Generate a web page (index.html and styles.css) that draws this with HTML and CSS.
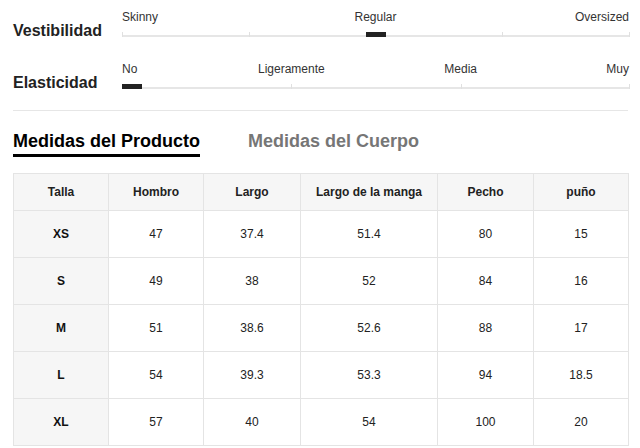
FILE: index.html
```html
<!DOCTYPE html>
<html lang="es">
<head>
<meta charset="utf-8">
<link rel="stylesheet" href="styles.css">
</head>
<body>
<div class="page">
  <div class="attr">
    <div class="attr-name">Vestibilidad</div>
    <div class="scale">
      <div class="labels">
        <span class="lb" style="left:0%">Skinny</span>
        <span class="lb mid" style="left:50%">Regular</span>
        <span class="lb end" style="left:100%">Oversized</span>
      </div>
      <div class="track">
        <i class="tick" style="left:0%"></i>
        <i class="tick" style="left:25%"></i>
        <i class="tick" style="left:50%"></i>
        <i class="tick" style="left:75%"></i>
        <i class="tick" style="left:100%"></i>
        <b class="marker" style="left:calc(50% - 10px)"></b>
      </div>
    </div>
  </div>
  <div class="attr">
    <div class="attr-name">Elasticidad</div>
    <div class="scale">
      <div class="labels">
        <span class="lb" style="left:0%">No</span>
        <span class="lb mid" style="left:33.4%">Ligeramente</span>
        <span class="lb mid" style="left:66.8%">Media</span>
        <span class="lb end" style="left:100%">Muy</span>
      </div>
      <div class="track">
        <i class="tick" style="left:0%"></i>
        <i class="tick" style="left:33.4%"></i>
        <i class="tick" style="left:66.8%"></i>
        <i class="tick" style="left:100%"></i>
        <b class="marker" style="left:0"></b>
      </div>
    </div>
  </div>
  <div class="sep"></div>
  <div class="tabs">
    <div class="tab active">Medidas del Producto</div>
    <div class="tab">Medidas del Cuerpo</div>
  </div>
  <table class="sizes">
    <colgroup>
      <col style="width:95px"><col style="width:95px"><col style="width:97px"><col style="width:137px"><col style="width:96px"><col style="width:95px">
    </colgroup>
    <thead>
      <tr><th>Talla</th><th>Hombro</th><th>Largo</th><th>Largo de la manga</th><th>Pecho</th><th>puño</th></tr>
    </thead>
    <tbody>
      <tr><th>XS</th><td>47</td><td>37.4</td><td>51.4</td><td>80</td><td>15</td></tr>
      <tr><th>S</th><td>49</td><td>38</td><td>52</td><td>84</td><td>16</td></tr>
      <tr><th>M</th><td>51</td><td>38.6</td><td>52.6</td><td>88</td><td>17</td></tr>
      <tr><th>L</th><td>54</td><td>39.3</td><td>53.3</td><td>94</td><td>18.5</td></tr>
      <tr><th>XL</th><td>57</td><td>40</td><td>54</td><td>100</td><td>20</td></tr>
    </tbody>
  </table>
</div>
</body>
</html>
```
FILE: styles.css
```css
* { box-sizing: border-box; }
html, body { margin: 0; padding: 0; background: #fff; }
body { font-family: "Liberation Sans", Arial, sans-serif; color: #222; overflow: hidden; }
.page { width: 640px; padding: 0 12px 0 13px; }
.attr { display: flex; align-items: flex-end; height: 52px; }
.attr:first-child { height: 38px; }
.attr-name { width: 109px; font-size: 16px; font-weight: bold; color: #222; line-height: 18px; margin-bottom: -2px; }
.scale { flex: 1; position: relative; height: 38px; margin-right: -1px; }
.labels { position: relative; height: 24px; }
.lb { position: absolute; top: 10px; font-size: 12px; color: #333; line-height: 14px; white-space: nowrap; }
.lb.mid { transform: translateX(-50%); }
.lb.end { transform: translateX(-100%); }
.track { position: relative; height: 2px; background: #e6e6e6; margin-top: 11px; }
.tick { position: absolute; bottom: 0; width: 1px; height: 5px; background: #e0e0e0; }
.marker { position: absolute; top: -3px; width: 20px; height: 5px; background: #222; }
.sep { height: 1px; background: #e6e6e6; margin-top: 20px; }
.tabs { display: flex; gap: 48px; height: 46px; padding-top: 20px; }
.tab { font-size: 18px; font-weight: bold; color: #767676; line-height: 20px; height: 26px; }
.tab.active { color: #000; border-bottom: 3px solid #000; }
.sizes { border-collapse: collapse; table-layout: fixed; width: 615px; margin-top: 16px; font-size: 12px; }
.sizes th, .sizes td { border: 1px solid #e4e4e4; text-align: center; padding: 0; color: #222; }
.sizes thead th { height: 37px; background: #f6f6f6; font-weight: bold; }
.sizes tbody th { background: #f6f6f6; font-weight: bold; height: 47px; color: #111; }
.sizes td { height: 47px; font-weight: normal; }
```
